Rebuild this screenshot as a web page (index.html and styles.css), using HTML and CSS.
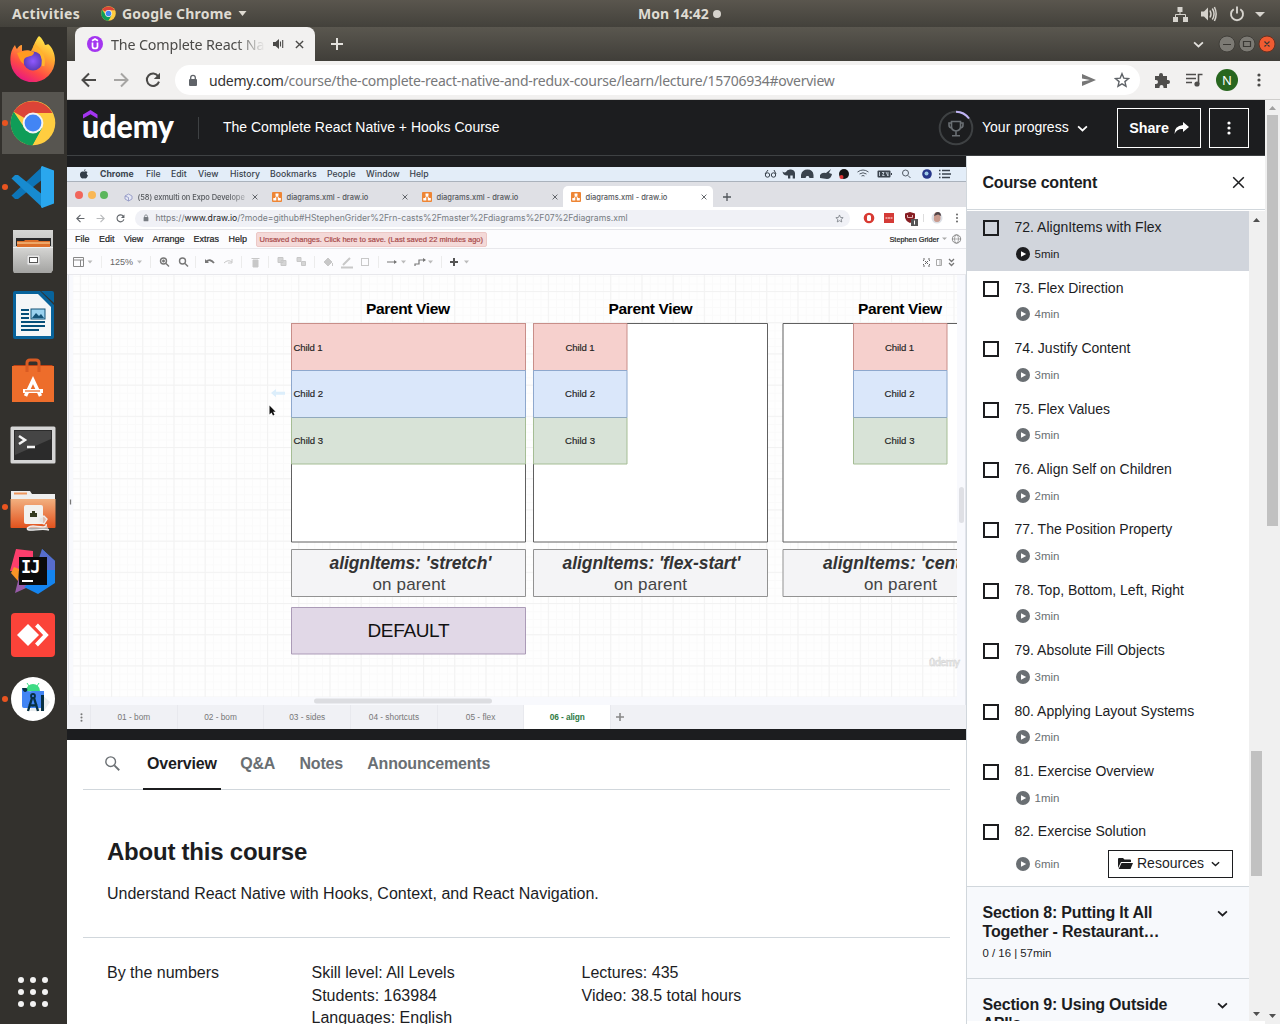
FILE: index.html
```html
<!DOCTYPE html>
<html lang="en">
<head>
<meta charset="utf-8">
<title>The Complete React Native + Hooks Course</title>
<link rel="stylesheet" href="styles.css">
</head>
<body>
<svg width="0" height="0" class="defs">
  <defs>
    <symbol id="chrome" viewBox="0 0 46 46">
      <circle cx="23" cy="23" r="22.3" fill="#ffcd40"/>
      <path d="M23 23L3.7 11.8A22.3 22.3 0 0 1 42.3 13H23Z" fill="#db4437"/>
      <path d="M3.7 11.8A22.3 22.3 0 0 0 22.4 45.3L32 28 14.2 27.6Z" fill="#0f9d58"/>
      <path d="M22.4 45.3L31.7 28 23 30Z" fill="#0f9d58"/>
      <circle cx="23" cy="23" r="10.4" fill="#f4f4f4"/><circle cx="23" cy="23" r="8.4" fill="#4285f4"/>
    </symbol>
    <symbol id="play" viewBox="0 0 14 14"><circle cx="7" cy="7" r="7" fill="currentColor"/><path d="M5 4.2L10.2 7 5 9.8Z" fill="#fff"/></symbol>
    <symbol id="chev" viewBox="0 0 10 6"><path d="M1 1L5 4.8 9 1" fill="none" stroke="currentColor" stroke-width="1.6"/></symbol>
    <symbol id="xmark" viewBox="0 0 10 10"><path d="M1 1L9 9M9 1L1 9" fill="none" stroke="currentColor" stroke-width="1.5"/></symbol>
    <symbol id="drawio" viewBox="0 0 10 10"><rect width="10" height="10" rx="1" fill="#ee8534"/><path d="M5 3L3 7M5 3L7 7" stroke="#fff" fill="none"/><path d="M3.5 1.5h3v2.3h-3zM1.3 6h3v2.4h-3zM5.8 6h3v2.4h-3z" fill="#fff"/></symbol>
    <symbol id="back" viewBox="0 0 16 16"><path d="M15 8H2M8 1.5L1.5 8 8 14.5" fill="none" stroke="currentColor" stroke-width="2"/></symbol>
    <symbol id="reload" viewBox="0 0 16 16"><path d="M13.2 4.2A6.2 6.2 0 1 0 14 9.6" fill="none" stroke="currentColor" stroke-width="2"/><path d="M15 .8V7H8.8Z" fill="currentColor"/></symbol>
    <symbol id="lock" viewBox="0 0 10 12"><rect x="1" y="4.5" width="8" height="7" rx="1" fill="currentColor"/><path d="M2.7 5V3.1a2.3 2.3 0 0 1 4.6 0V5" fill="none" stroke="currentColor" stroke-width="1.3"/></symbol>
    <symbol id="star" viewBox="0 0 16 16"><path d="M8 1.7l1.8 4.4 4.7.4-3.6 3.1 1.1 4.6L8 11.8l-4 2.4 1.1-4.6L1.5 6.500l4.700-.4Z" fill="none" stroke="currentColor" stroke-width="1.400"/></symbol>
    <symbol id="dots" viewBox="0 0 4 14"><circle cx="2" cy="2" r="1.600" fill="currentColor"/><circle cx="2" cy="7" r="1.600" fill="currentColor"/><circle cx="2" cy="12" r="1.600" fill="currentColor"/></symbol>
    <symbol id="mag" viewBox="0 0 14 14"><circle cx="5.300" cy="5.300" r="4.500" fill="none" stroke="currentColor" stroke-width="1.300"/><path d="M8.700 8.700L13.300 13.300" stroke="currentColor" stroke-width="1.700"/></symbol>
    <symbol id="down" viewBox="0 0 8 5"><path d="M0 0h8L4 5Z" fill="currentColor"/></symbol>
    <linearGradient id="ffo" x1=".8" y1="0" x2=".25" y2="1"><stop offset="0" stop-color="#fff44f"/><stop offset=".35" stop-color="#ffa930"/><stop offset=".7" stop-color="#ff4a45"/><stop offset="1" stop-color="#e5118a"/></linearGradient>
    <radialGradient id="ffp"><stop offset="0" stop-color="#9059ff"/><stop offset="1" stop-color="#5b3bb8"/></radialGradient>
    <linearGradient id="orange" x1="0" y1="0" x2="0" y2="1"><stop offset="0" stop-color="#f2b07f"/><stop offset="1" stop-color="#e2521d"/></linearGradient>
    <linearGradient id="silver" x1="0" y1="0" x2="0" y2="1"><stop offset="0" stop-color="#d6d6d4"/><stop offset="1" stop-color="#a3a3a1"/></linearGradient>
    <pattern id="minor" x="111.500" y="291.400" width="7.800" height="7.800" patternUnits="userSpaceOnUse"><path d="M0 .5H7.800M.5 0V7.800" stroke="#fafafa"/></pattern>
    <pattern id="major" x="111" y="291" width="31.200" height="31.200" patternUnits="userSpaceOnUse"><path d="M0 .5H31.200M.5 0V31.200" stroke="#f2f2f2"/></pattern>
    <clipPath id="canvasclip"><rect x="73" y="275" width="884" height="422"/></clipPath>
  </defs>
</svg>

<header class="topbar">
  <span class="activities">Activities</span>
  <svg class="app-ico" width="15" height="15"><use href="#chrome"/></svg>
  <span class="appname">Google Chrome</span>
  <svg class="app-caret" width="9" height="5"><use href="#down"/></svg>
  <span class="clock">Mon 14:42</span><i class="clockdot"></i>
  <svg class="tray" width="96" height="18" viewBox="1170 4 96 18" fill="#d6d3cd" stroke="none">
    <path d="M1177.500 6h5v5h-5zM1173 16h5v5h-5zM1183 16h5v5h-5z"/><path d="M1180 10v3.500M1175.500 17v-3.500h10V17" fill="none" stroke="#d6d3cd"/>
    <path d="M1201 10.500h3l4-4v13l-4-4h-3z"/><path d="M1210 9.500q2 3.500 0 7M1212.300 7.500q3.500 5.500 0 11M1214.400 6q3.500 7 0 14" fill="none" stroke="#d6d3cd" stroke-width="1.500"/>
    <path d="M1233.700 8.200a6 6 0 1 0 6.600 0M1237 5.500v7" fill="none" stroke="#d6d3cd" stroke-width="1.900"/><path d="M1255 11h10l-5 5z"/>
  </svg>
</header>

<div class="desktop">
<nav class="dock">
  <div class="app"><svg width="46" height="46" viewBox="0 0 46 46"><path d="M29 0c3 2 5 6 6 9 2 0 3-1 3-1 4 3 7 9 7 16a22.300 22.300 0 0 1-44.600 0C.4 17 2 13 5 9c0 0 1 3 2 4 1-2 3-4 5-4v6c3-1 7-1 9 0L24 9c1-3 3-7 5-9Z" fill="url(#ffo)"/><circle cx="23" cy="25" r="9.500" fill="url(#ffp)"/><path d="M7 17c6-2 11-2 17-1 0 4-4 4-7 5s-4 4-3 7c-4-2-5-7-7-11Z" fill="#ff9a20"/><path d="M24 9c4 3 11 10 9 21" fill="none" stroke="#ffb52e" stroke-width="3"/></svg></div>
  <div class="app active run"><svg width="46" height="46"><use href="#chrome"/></svg></div>
  <div class="app run"><svg width="46" height="46" viewBox="0 0 46 46"><path d="M33 2L1.500 31.500 5 35h3L33 15Z" fill="#0d75b8"/><path d="M33 44L1.500 14.500 5 11h3L33 31Z" fill="#178bd0"/><path d="M32 2l12 4.500v33L32 44 31 43V3Z" fill="#2aa7ee"/></svg></div>
  <div class="app"><svg width="46" height="46" viewBox="0 0 46 46"><path d="M3 2h40v40l-2 3H4l-1-3Z" fill="url(#silver)"/><path d="M6 10h35v8H6Z" fill="#29292a"/><path d="M7 13h7l1-1h13l1 1h11v6H7Z" fill="#dc6f2b"/><path d="M7 15h33" stroke="#ffdfa5"/><path d="M3 19h40v23l-2 3H4l-1-3Z" fill="url(#silver)"/><path d="M3 19h40v1H3z" fill="#eee"/><rect x="17" y="27" width="13" height="10" rx="1.500" fill="#e9e9e9" stroke="#bababa"/><rect x="19.500" y="29.500" width="8" height="5" fill="#fff" stroke="#555"/></svg></div>
  <div class="app"><svg width="46" height="48" viewBox="0 0 46 48"><path d="M5 0h25l14 14v32q0 2-2 2H5q-2 0-2-2V2q0-2 2-2Z" fill="#08639b"/><path d="M6 3h22l13 13v29H6Z" fill="#f4f6f7"/><path d="M31 0h11q2 0 2 2v10Z" fill="#08639b"/><path d="M11 19h8M11 23h8M11 27h8M11 31h24M11 35h24M11 39h18" stroke="#064f79" stroke-width="2"/><rect x="21" y="18" width="14" height="10" fill="#9bd2ef" stroke="#155377"/><path d="M22 27l4-5 3 3 2-2 3 4Z" fill="#155377"/></svg></div>
  <div class="app low"><svg width="46" height="46" viewBox="0 0 46 46"><path d="M2 8h42v36H2Z" fill="#ed6d2b"/><path d="M3 8h40l-1-1H4Z" fill="#bd4013"/><path d="M17 14V5q0-3 3-3h6q3 0 3 3v9" stroke="#d95b23" stroke-width="3" fill="none"/><path d="M15.500 38L23 22l7.500 16" stroke="#fff" stroke-width="3.500" fill="none"/><path d="M13 33h20" stroke="#fff" stroke-width="4"/><path d="M15 33h15" stroke="#ed6d2b" stroke-width="1.300"/></svg></div>
  <div class="app low"><svg width="46" height="40" viewBox="0 0 46 40"><rect x=".5" y="1.500" width="45" height="37" rx="1.500" fill="#d6d6d6"/><rect x="4" y="5" width="38" height="30" fill="#2b2b2b"/><path d="M5 6h36v8L5 30Z" fill="#454545"/><path d="M9 11l6 4-6 4M17 22h8" stroke="#f5f5f5" stroke-width="2.500" fill="none"/></svg></div>
  <div class="app run low"><svg width="46" height="44" viewBox="0 0 46 44"><path d="M1 8V4h19l2 3h23v10H1Z" fill="#eee"/><path d="M4 6.500h13" stroke="#ee965c" stroke-width="2"/><path d="M.5 12h45v28q0 1-1 1h-43q-1 0-1-1Z" fill="url(#orange)"/><rect x="14" y="18" width="19" height="19" rx="2" fill="#f2f1ee"/><path d="M20 30v-4h2v-2h3v2h2v4Z" fill="#373c21"/><path d="M36 37c2 5-9 2-13 2s-8 3-4 4 12-2 20 0M29 31l5-2 3 3-3 5-5-2Z" fill="#ddd" fill-opacity=".7" stroke="#eee" stroke-width="1.400"/></svg></div>
  <div class="app"><svg width="46" height="46" viewBox="0 0 46 46"><path d="M6 1l17 2v20H0Z" fill="#fd3e6c"/><path d="M4 19l5 2-1 12-7-8Z" fill="#f99427"/><path d="M8 18h17v18L5 45l5-20Z" fill="#975ba8"/><path d="M32 1l13 12v22l-17 11-14-7 17-12Z" fill="#1484ef"/><path d="M32 1l13 12v9H25Z" fill="#576dcc"/><rect x="9" y="9" width="28" height="28" fill="#0b0b0b"/><text x="11" y="25" class="ij">IJ</text><path d="M12 33h11" stroke="#fff" stroke-width="2"/></svg></div>
  <div class="app"><svg width="46" height="46" viewBox="0 0 46 46"><rect x="1" y="1" width="44" height="44" rx="4" fill="#fb4339"/><path d="M18 12l11 11-11 11L7 23Z" fill="#fff"/><path d="M26.500 13L36 23l-9.500 10" stroke="#fff" stroke-width="4" fill="none"/></svg></div>
  <div class="app run"><svg width="46" height="46" viewBox="0 0 46 46"><circle cx="23" cy="23" r="22" fill="#fff"/><path d="M28 15l12 11-6 9H20Z" fill="#e9ecee"/><path d="M16 15a7 7 0 0 1 14 0Z" fill="#3ddc84"/><path d="M17 7l2 3M29 7l-2 3" stroke="#3ddc84"/><path d="M12 12q4 4 10 3h12v17H14q-2 0-2-2Z" fill="#4285f4"/><path d="M12 12h4q2 0 1 3-3 3-5-3ZM31 19h3v16h-3Z" fill="#073042"/><circle cx="23" cy="20" r="2" fill="#4285f4" stroke="#073042" stroke-width="1.800"/><path d="M22 22l-4 13M24 22l4 13M19 28q4 3 8 0" stroke="#073042" stroke-width="2.400" fill="none"/></svg></div>
  <svg class="grid9" width="32" height="32" viewBox="0 0 32 32" fill="#f2f2f2"><circle cx="4" cy="4" r="3"/><circle cx="16" cy="4" r="3"/><circle cx="28" cy="4" r="3"/><circle cx="4" cy="16" r="3"/><circle cx="16" cy="16" r="3"/><circle cx="28" cy="16" r="3"/><circle cx="4" cy="28" r="3"/><circle cx="16" cy="28" r="3"/><circle cx="28" cy="28" r="3"/></svg>
</nav>

<main class="window">
  <div class="tabstrip">
    <div class="tab">
      <svg width="16" height="16" viewBox="0 0 16 16"><circle cx="8" cy="8" r="8" fill="#a435f0"/><path d="M5 4.800L8 3l3 1.800M5.500 6.500v4q0 2 2.500 2t2.500-2v-4" stroke="#fff" stroke-width="1.700" fill="none"/></svg>
      <span class="tabname">The Complete React Na</span>
      <svg class="aud" width="11" height="10" viewBox="0 0 11 10"><path d="M0 3h2.500L6 0v10L2.500 7H0Z" fill="#4b4a48"/><path d="M7.500 2.500v5M9.700 1v8" stroke="#4b4a48" stroke-width="1.100"/></svg>
      <svg class="tabx" width="9" height="9"><use href="#xmark"/></svg>
    </div>
    <svg class="plus" width="12" height="12" viewBox="0 0 12 12"><path d="M6 0v12M0 6h12" stroke="#e4e2de" stroke-width="2"/></svg>
    <svg class="stripchev" width="11" height="7"><use href="#chev"/></svg>
    <svg class="winbtns" width="60" height="20" viewBox="0 0 60 20"><circle cx="11" cy="10" r="8" fill="#7c7a74" stroke="#403e39"/><circle cx="31" cy="10" r="8" fill="#7c7a74" stroke="#403e39"/><circle cx="51" cy="10" r="8" fill="#ef5b31" stroke="#693020"/><path d="M7 10.500h8M27.500 7.500h7v5h-7zM48.500 7.500l5 5M53.500 7.500l-5 5" fill="none" stroke="#3a3834" stroke-width="1.200"/></svg>
  </div>
  <div class="toolbar">
    <svg class="tb" width="16" height="16"><use href="#back"/></svg>
    <svg class="tb fwd" width="16" height="16"><use href="#back"/></svg>
    <svg class="tb" width="16" height="16"><use href="#reload"/></svg>
    <div class="omni">
      <svg width="10" height="13"><use href="#lock"/></svg>
      <span class="url"><b>udemy.com</b>/course/the-complete-react-native-and-redux-course/learn/lecture/15706934#overview</span>
      <svg width="14" height="12" viewBox="0 0 14 12" class="send"><path d="M0 0l14 6-14 6V7.500L8 6 0 4.500Z" fill="#777"/></svg>
      <svg width="16" height="16" class="ostar"><use href="#star"/></svg>
    </div>
    <svg class="ext" width="16" height="16" viewBox="0 0 16 16"><path d="M1 4h4V3a2 2 0 0 1 4 0v1h4v4h1a2 2 0 0 1 0 4h-1v4H9.500v-1a2 2 0 0 0-4 0v1H1v-4h1a2 2 0 0 0 0-4H1Z" fill="#4f4e4c"/></svg>
    <svg class="media" width="17" height="14" viewBox="0 0 17 14"><path d="M0 1.500h10M0 5.500h10M0 9.500h6M12.500 11V1.500h4" stroke="#4f4e4c" stroke-width="1.600" fill="none"/><circle cx="11" cy="11" r="2.600" fill="#4f4e4c"/></svg>
    <span class="avatar">N</span>
    <svg class="kebab" width="4" height="14"><use href="#dots"/></svg>
  </div>

  <div class="page">
  <div class="content">
    <div class="chead">
      <svg class="logo" width="92" height="38" viewBox="0 0 92 38"><path d="M0 4.500L7.500 0l7 4.500v4L7.500 4.300 0 8.500Z" fill="#a435f0"/><text x="-1" y="28" class="word" textLength="92" lengthAdjust="spacingAndGlyphs">udemy</text></svg>
      <i class="vr"></i>
      <span class="ctitle">The Complete React Native + Hooks Course</span>
      <svg class="trophy" width="36" height="36" viewBox="0 0 36 36" fill="none"><circle cx="18" cy="18" r="16.300" stroke="#3e4143" stroke-width="2"/><path d="M18 1.700A16.300 16.300 0 0 1 31 8.500" stroke="#c0b4f5" stroke-width="2"/><path d="M13.500 11.500h9v5q0 4-4.500 4.500-4.500-.5-4.500-4.500ZM13.500 13H11v2q0 3 3 3M22.500 13H25v2q0 3-3 3M18 21v4.500M14 25.700h8" stroke="#6a6f73" stroke-width="1.600"/></svg>
      <span class="prog">Your progress</span>
      <svg width="11" height="7" class="progchev"><use href="#chev"/></svg>
      <span class="share">Share<svg width="15" height="12" viewBox="0 0 15 12"><path d="M9 0l6 5-6 5V7Q3 6.500.5 12 0 4 9 3Z" fill="#fff"/></svg></span>
      <span class="more"><svg width="4" height="14"><use href="#dots"/></svg></span>
    </div>
    <div class="cols">
    <section class="left">
      <div class="video">
        <div class="macbar">
          <svg width="10" height="10" viewBox="0 0 10 10"><path d="M5 2.800Q6.500 1.800 8.500 3 6.800 4.800 9 6.500 7.500 10 6 9.500q-1-.4-2 0C2 10 0 6 1.500 3.800 3 2 5 2.800 5 2.800ZM5 2.200Q5 .5 6.500 0 6.600 1.700 5 2.200Z" fill="#333d48"/></svg>
          <b>Chrome</b><span>File</span><span>Edit</span><span>View</span><span>History</span><span>Bookmarks</span><span>People</span><span>Window</span><span>Help</span>
          <svg width="192" height="12" viewBox="764 168 192 12" fill="#3a434d"><path d="M766 174l3-4M777 174l-2-4" stroke="#3a434d"/><circle cx="768.500" cy="175" r="2.200" fill="none" stroke="#3a434d"/><circle cx="774.500" cy="175" r="2.200" fill="none" stroke="#3a434d"/><path d="M783.500 171.500q2 1.500 3.500.5 1-3 5-2.500 4 .5 4 4v5h-2.300v-3h-2.400v3h-2.300v-3q-5 .5-5.500-4ZM802 178v-3q1-5.500 6.500-5.500t6 5.500v3h-4l-1-2h-2l-1 2ZM821 178v-3q2-3 6-2l5-4-2 4 3 1q-1 5-5 5Z"/><circle cx="845" cy="174" r="5" fill="#151515"/><circle cx="842.500" cy="177" r="2" fill="#d33"/><path d="M858.500 172q5.500-4 11 0M860.500 174q3.500-2.500 7 0M862.500 176q1.500-1 3 0" fill="none" stroke="#505963"/><rect x="878.500" y="170.500" width="13" height="7" rx="1"/><path d="M892.500 173v2" stroke="#3a434d"/><path d="M880.500 172v4M883 172.500h2l-1.500 3h2M887 172l2 4M889 172v4" stroke="#dbe7f3" fill="none" stroke-width=".8"/><circle cx="906.500" cy="173" r="3" fill="none" stroke="#505963"/><path d="M909 175.500l2.500 2.500" stroke="#505963"/><circle cx="928" cy="174" r="4.800" fill="#26368a"/><circle cx="927.500" cy="173.500" r="2" fill="#9dcbe5"/><path d="M943 170.500h8M943 174h9M943 177.500h8M940 170.500h1.500M940 174h1.500M940 177.500h1.500" stroke="#3a434d" stroke-width="1.300"/></svg>
        </div>
        <div class="mactabs">
          <i class="tl r"></i><i class="tl y"></i><i class="tl g"></i>
          <svg class="t1" width="9" height="9" viewBox="0 0 9 9"><path d="M4.500 1L8 3v3L4.500 8 1 6V3ZM4.500 4.500V8M1 3l3.500 1.500" fill="#e5e8f5" stroke="#8a90c0" stroke-width=".8"/></svg>
          <span class="mt mt1">(58) exmulti on Expo Develope</span><svg class="mx" width="6" height="6"><use href="#xmark"/></svg>
          <svg class="di d2" width="10" height="10"><use href="#drawio"/></svg><span class="mt mt2">diagrams.xml - draw.io</span><svg class="mx" width="6" height="6"><use href="#xmark"/></svg>
          <svg class="di d2" width="10" height="10"><use href="#drawio"/></svg><span class="mt mt2">diagrams.xml - draw.io</span><svg class="mx" width="6" height="6"><use href="#xmark"/></svg>
          <div class="mactab"><svg width="10" height="10"><use href="#drawio"/></svg><span class="mt mt2">diagrams.xml - draw.io</span><svg class="mx" width="6" height="6"><use href="#xmark"/></svg></div>
          <svg class="mplus" width="8" height="8" viewBox="0 0 8 8"><path d="M4 0v8M0 4h8" stroke="#50555a" stroke-width="1.300"/></svg>
        </div>
        <div class="macurl">
          <svg width="9" height="9"><use href="#back"/></svg><svg class="fwd" width="9" height="9"><use href="#back"/></svg><svg width="9" height="9"><use href="#reload"/></svg>
          <div class="macomni"><svg width="6" height="8"><use href="#lock"/></svg><span>https://<b>www.draw.io</b>/?mode=github#HStephenGrider%2Frn-casts%2Fmaster%2Fdiagrams%2F07%2Fdiagrams.xml</span><svg class="mstar" width="9" height="9"><use href="#star"/></svg></div>
          <svg class="mext" width="104" height="16" viewBox="856 211 104 16"><circle cx="864" cy="219" r="5.300" fill="#d83a32"/><rect x="862" y="216" width="4" height="6" rx="1.500" fill="#fff"/><rect x="879" y="214" width="10" height="10" fill="#d43b37"/><path d="M880.500 219h7" stroke="#f3b9b4" stroke-width="1.500" stroke-dasharray="2 .5"/><path d="M905 213l5 1.500v4q-1 4-5 5.500-4-1.500-5-5.500v-4Z" fill="#861d22"/><path d="M902.500 216v2.500h5v-2.500" fill="none" stroke="#e5b4b4"/><rect x="906" y="220" width="7" height="7" fill="#555"/><path d="M909.500 221.500v4" stroke="#fff"/><path d="M918.500 215v8" stroke="#ddd"/><circle cx="932" cy="219" r="5.500" fill="#dcdfe5"/><path d="M929 218q0-5 3-5t3.500 5-3.500 5-3-5Z" fill="#c99a8d"/><path d="M929 217q1-4 4-4t3 4l-3-1.500Z" fill="#514548"/><circle cx="952" cy="215.500" r=".9" fill="#555"/><circle cx="952" cy="219" r=".9" fill="#555"/><circle cx="952" cy="222.500" r=".9" fill="#555"/></svg>
        </div>
        <div class="iomenu"><span>File</span><span>Edit</span><span>View</span><span>Arrange</span><span>Extras</span><span>Help</span><em>Unsaved changes. Click here to save. (Last saved 22 minutes ago)</em><span class="sg">Stephen Grider</span><svg width="20" height="10" viewBox="0 0 20 10"><path d="M0 3.500h5L2.500 6Z" fill="#aaa"/><circle cx="14.500" cy="5" r="4.200" fill="none" stroke="#888"/><ellipse cx="14.500" cy="5" rx="2" ry="4.200" fill="none" stroke="#888" stroke-width=".7"/><path d="M10.500 5h8" stroke="#888" stroke-width=".7"/></svg></div>
        <div class="iotools">
          <svg width="36" height="20" viewBox="67 252 36 20"><path d="M73.500 257.500h10v9h-10zM73.500 260h10M80.500 260v6.500" fill="none" stroke="#888"/><path d="M87.500 260.500h5l-2.500 3Z" fill="#bbb"/><path d="M101.500 256v12" stroke="#eee"/></svg>
          <span>125%</span>
          <svg width="824" height="20" viewBox="137 252 824 20" fill="none" stroke="#c8c8c8"><path d="M137 260.500h5l-2.500 3Z" fill="#bbb" stroke="none"/><path d="M150.500 256v12M195.500 256v12M241.500 256v12M268.500 256v12M314.500 256v12M378.500 256v12M441.500 256v12" stroke="#ececec"/><g stroke="#777" stroke-width="1.400"><circle cx="163.500" cy="261" r="3"/><path d="M166 263.500l3 3M162 261h3M163.500 259.500v3"/><circle cx="182.500" cy="261" r="3"/><path d="M185 263.500l3 3"/><path d="M206 262q4-4 8 1" stroke-width="1.800"/></g><path d="M205 259v4h4Z" fill="#777" stroke="none"/><path d="M224 263q4-4 8-1M232 259v4h-4" /><path d="M251.500 258.500h8M253 260h5v7h-5z" fill="#c8c8c8"/><path d="M278 257.500h5v5h-5zM281 260.500h5v5h-5zM297 257.500h4v4h-4zM301.500 261.500h4v4h-4z" fill="#d5d5d5"/><path d="M324 262l4-4 4 4-4 4ZM332.500 263v3" fill="#c8c8c8"/><path d="M341 267.500h12M343 265l7-7" stroke-width="2"/><rect x="361.500" y="258.500" width="7" height="7"/><path d="M387 262h9M415 266v-2h4v-4h6" stroke="#777" stroke-width="1.200"/><path d="M394 260l3 2-3 2ZM423 258l3 2-3 2Z" fill="#777" stroke="none"/><path d="M401 260.500h5l-2.500 3ZM428 260.500h5l-2.500 3ZM464 260.500h5l-2.500 3Z" fill="#bbb" stroke="none"/><path d="M450 262h8M454 258v8" stroke="#555" stroke-width="2"/><path d="M923 259h2M928 259h2M923 266h2M928 266h2M923.500 260v1M929.500 260v1M923.500 264v1M929.500 264v1M925 261l3 3M928 261l-3 3" stroke="#666"/><path d="M936.500 259.500h5v6h-5zM940 260v5" stroke="#aaa"/><path d="M949 259l2.500 2.500L954 259M949 263l2.500 2.500L954 263" stroke="#777" stroke-width="1.300"/></svg>
        </div>
        <svg class="canvas" width="899" height="430" viewBox="67 275 899 430">
          <rect x="67" y="275" width="899" height="430" fill="#f8f9fd"/><rect x="73" y="275" width="884" height="422" fill="#fefefe"/>
          <path d="M68.500 275v430M965.500 275v430" stroke="#e3e5ec"/>
          <g clip-path="url(#canvasclip)">
            <rect x="73" y="275" width="884" height="422" fill="url(#minor)"/><rect x="73" y="275" width="884" height="422" fill="url(#major)"/>
            <g fill="#fff" stroke="#606060"><path d="M291.500 323.500h234v218.500h-234zM533.500 323.500h234v218.500h-234zM783 323.500h234v218.500h-234z"/></g>
            <g fill="#f6d0cd" stroke="#c88e89"><path d="M291.500 323.500h234v47h-234zM533.500 323.500h93.500v47h-93.500zM853.500 323.500h93.500v47h-93.500z"/></g>
            <g fill="#dae7fa" stroke="#8ea8cd"><path d="M291.500 370.500h234v47h-234zM533.500 370.500h93.500v47h-93.500zM853.500 370.500h93.500v47h-93.500z"/></g>
            <g fill="#d8e3d7" stroke="#a5bd94"><path d="M291.500 417.500h234v46.500h-234zM533.500 417.500h93.500v46.500h-93.500zM853.500 417.500h93.500v46.500h-93.500z"/></g>
            <path d="M291.500 417.500h234M533.500 417.500h93.500M853.500 417.500h93.500" stroke="#90a9bd"/>
            <g fill="#f4f4f6" stroke="#929292"><path d="M291.500 549.500h234v47h-234zM533.500 549.500h234v47h-234zM783 549.500h234v47h-234z"/></g>
            <path d="M291.500 607.500h234v46.500h-234z" fill="#e1d8e7" stroke="#ab9bb7"/>
            <g class="pv"><text x="366" y="314" textLength="84">Parent View</text><text x="608.500" y="314" textLength="84">Parent View</text><text x="858" y="314" textLength="84">Parent View</text></g>
            <g class="ch"><text x="293.500" y="350.500" textLength="29">Child 1</text><text x="293.500" y="397.300" textLength="29.500">Child 2</text><text x="293.500" y="444" textLength="29.500">Child 3</text><text x="565.500" y="350.500" textLength="29">Child 1</text><text x="565" y="397.300" textLength="30">Child 2</text><text x="565" y="444" textLength="30">Child 3</text><text x="885" y="350.500" textLength="29">Child 1</text><text x="884.500" y="397.300" textLength="30">Child 2</text><text x="884.500" y="444" textLength="30">Child 3</text></g>
            <g class="al"><text x="329.500" y="569" textLength="162">alignItems: 'stretch'</text><text x="562.500" y="569" textLength="178">alignItems: 'flex-start'</text><text x="823" y="569" textLength="159">alignItems: 'center'</text></g>
            <g class="op"><text x="372.500" y="589.500" textLength="73">on parent</text><text x="614" y="589.500" textLength="73">on parent</text><text x="864" y="589.500" textLength="73">on parent</text></g>
            <text x="367.500" y="637" class="df" textLength="82">DEFAULT</text>
          </g>
          <path d="M271 393l5-4v2.800h9v3h-9v2.500Z" fill="#dceefb"/><path d="M269.500 405.500v9l2-2 1.500 3 1.500-.8-1.400-3h2.500Z" fill="#111"/>
          <path d="M70.500 499.500v5" stroke="#777" stroke-width="1.300"/><rect x="959" y="487" width="5" height="36" rx="2.500" fill="#dfe0e5"/><rect x="314" y="698.500" width="178" height="5" rx="2.500" fill="#dcdde1"/>
          <text x="929" y="666" class="wm" textLength="31">ûdemy</text>
        </svg>
        <div class="sheets"><i><svg width="3" height="9"><use href="#dots"/></svg></i><span>01 - bom</span><span>02 - bom</span><span>03 - sides</span><span>04 - shortcuts</span><span>05 - flex</span><span class="on">06 - align</span><svg width="8" height="8" viewBox="0 0 8 8"><path d="M4 0v8M0 4h8" stroke="#888" stroke-width="1.600"/></svg></div>
      </div>
      <div class="tabs"><svg width="15" height="15"><use href="#mag"/></svg><span class="cur">Overview</span><span>Q&amp;A</span><span>Notes</span><span>Announcements</span></div>
      <div class="about"><h1>About this course</h1><p>Understand React Native with Hooks, Context, and React Navigation.</p></div>
      <div class="nums"><div>By the numbers</div><div>Skill level: All Levels<br>Students: 163984<br>Languages: English</div><div>Lectures: 435<br>Video: 38.5 total hours</div></div>
    </section>
    <aside class="side">
      <div class="sidehead"><h2>Course content</h2><svg width="13" height="13" viewBox="0 0 13 13"><path d="M1.200 1.200l10.600 10.600M11.800 1.200L1.200 11.800" stroke="#1c1d1f" stroke-width="1.500"/></svg></div>
      <div class="sidebody">
        <div class="list">
          <div class="item sel"><i></i><div><p>72. AlignItems with Flex</p><small><svg width="14" height="14"><use href="#play"/></svg>5min</small></div></div>
          <div class="item"><i></i><div><p>73. Flex Direction</p><small><svg width="14" height="14"><use href="#play"/></svg>4min</small></div></div>
          <div class="item"><i></i><div><p>74. Justify Content</p><small><svg width="14" height="14"><use href="#play"/></svg>3min</small></div></div>
          <div class="item"><i></i><div><p>75. Flex Values</p><small><svg width="14" height="14"><use href="#play"/></svg>5min</small></div></div>
          <div class="item"><i></i><div><p>76. Align Self on Children</p><small><svg width="14" height="14"><use href="#play"/></svg>2min</small></div></div>
          <div class="item"><i></i><div><p>77. The Position Property</p><small><svg width="14" height="14"><use href="#play"/></svg>3min</small></div></div>
          <div class="item"><i></i><div><p>78. Top, Bottom, Left, Right</p><small><svg width="14" height="14"><use href="#play"/></svg>3min</small></div></div>
          <div class="item"><i></i><div><p>79. Absolute Fill Objects</p><small><svg width="14" height="14"><use href="#play"/></svg>3min</small></div></div>
          <div class="item"><i></i><div><p>80. Applying Layout Systems</p><small><svg width="14" height="14"><use href="#play"/></svg>2min</small></div></div>
          <div class="item"><i></i><div><p>81. Exercise Overview</p><small><svg width="14" height="14"><use href="#play"/></svg>1min</small></div></div>
          <div class="item last"><i></i><div><p>82. Exercise Solution</p><small><svg width="14" height="14"><use href="#play"/></svg>6min<span class="res"><svg width="15" height="11" viewBox="0 0 15 11"><path d="M0 10V1q0-1 1-1h4l1.500 1.500H12q1 0 1 1V4H3Z" fill="#1c1d1f"/><path d="M3.500 5H15l-2.500 6H.7Z" fill="#1c1d1f"/></svg>Resources<svg class="rc" width="9" height="6"><use href="#chev"/></svg></span></small></div></div>
          <div class="sec"><div><h3>Section 8: Putting It All<br>Together - Restaurant…</h3><small>0 / 16 | 57min</small></div><svg width="11" height="7"><use href="#chev"/></svg></div>
          <div class="sec"><div><h3>Section 9: Using Outside<br>API's</h3></div><svg width="11" height="7"><use href="#chev"/></svg></div>
        </div>
        <div class="sbar inner"><svg width="7" height="4" viewBox="0 0 7 4"><path d="M0 4h7L3.500 0Z" fill="#505050"/></svg><i></i><svg width="7" height="4" viewBox="0 0 7 4"><path d="M0 0h7L3.500 4Z" fill="#505050"/></svg></div>
      </div>
    </aside>
    </div>
  </div>
  <div class="sbar outer"><svg width="7" height="4" viewBox="0 0 7 4"><path d="M0 4h7L3.500 0Z" fill="#a0a0a0"/></svg><i></i><svg width="7" height="4" viewBox="0 0 7 4"><path d="M0 0h7L3.500 4Z" fill="#505050"/></svg></div>
  </div>
</main>
</div>
</body>
</html>
```
FILE: styles.css
```css
* { box-sizing: border-box; }
body { margin: 0; width: 1280px; height: 1024px; overflow: hidden; font-family: "Liberation Sans", Arial, sans-serif; color: #1c1d1f; display: flex; flex-direction: column; }
svg { display: block; flex: none; }
h1, h2, h3, p { margin: 0; }
span { white-space: nowrap; }
.defs { position: absolute; }

.topbar { height: 27px; flex: none; display: flex; align-items: center; background: linear-gradient(#5a564e, #43413b); color: #dfdbd2; font: bold 14px "Noto Sans", sans-serif; padding-left: 12px; }
.activities { width: 89px; letter-spacing: .3px; }
.app-ico { margin-right: 6px; }
.appname { width: 111px; letter-spacing: .2px; }
.app-caret { margin-left: 5px; }
.clock { margin-left: 391px; width: 71px; }
.clockdot { width: 8px; height: 8px; border-radius: 50%; background: #d6d3cd; margin-left: 4px; }
.tray { margin-left: auto; margin-right: 14px; }

.desktop { flex: 1; display: flex; min-height: 0; }
.dock { width: 67px; flex: none; background: #33312d; display: flex; flex-direction: column; }
.app { height: 64px; flex: none; display: flex; align-items: center; justify-content: center; position: relative; margin-right: 1px; }
.app.low { padding-top: 4px; }
.app.active { background: linear-gradient(#575550, #575550) 2px 1px / 62px 62px no-repeat; }
.run::before { content: ""; position: absolute; left: 2px; top: 29px; width: 6px; height: 6px; border-radius: 50%; background: #e95420; }
.ij { font: bold 17px "DejaVu Sans Mono", monospace; fill: #fff; letter-spacing: -1px; }
.grid9 { margin: auto auto 16px 17px; }

.window { flex: 1; display: flex; flex-direction: column; min-width: 0; }
.tabstrip { height: 34px; flex: none; background: linear-gradient(#5a574f, #403e39); display: flex; align-items: center; padding-left: 8px; color: #e4e2de; }
.tab { width: 240px; height: 34px; background: #f2f1f0; border-radius: 8px 8px 0 0; display: flex; align-items: center; padding-left: 12px; color: #4b4a48; }
.tabname { font: 14.300px "Noto Sans", sans-serif; width: 155px; margin-left: 8px; letter-spacing: -.16px; -webkit-mask-image: linear-gradient(90deg, #000 125px, transparent 154px); }
.aud { margin-left: 7px; }
.tabx { margin-left: 11px; }
.plus { margin-left: 16px; }
.stripchev { margin-left: auto; margin-right: 12px; }
.winbtns { margin-right: 4px; }
.toolbar { height: 39px; flex: none; background: #f2f1f0; border-bottom: 1px solid #cfcecc; display: flex; align-items: center; padding-left: 14px; color: #4b4a48; }
.tb { margin-right: 16px; }
.fwd { transform: scaleX(-1); opacity: .45; }
.omni { width: 965px; height: 30px; margin-left: -2px; background: #fff; border-radius: 15px; display: flex; align-items: center; padding: 0 10px 0 13px; color: #5f6368; }
.url { margin-left: 11px; font: 14px "Noto Sans", sans-serif; width: 640px; color: #77787a; letter-spacing: -.25px; }
.url b { font-weight: 400; color: #333; }
.send { margin-left: auto; margin-right: 18px; }
.ext { margin-left: 14px; }
.media { margin-left: 16px; }
.avatar { width: 22px; height: 22px; border-radius: 50%; background: #28661f; color: #fff; font: 13px/22px "Noto Sans", sans-serif; text-align: center; margin-left: 13px; }
.kebab { margin-left: 19px; }

.page { flex: 1; display: flex; min-height: 0; }
.content { width: 1198px; display: flex; flex-direction: column; background: #fff; min-height: 0; }
.chead { height: 56px; flex: none; background: #1c1d1f; border-bottom: 1px solid #3e4143; display: flex; align-items: center; color: #fff; font-size: 14px; padding-left: 16px; }
.logo { margin-top: 3px; overflow: visible; }
.word { font: 900 32px Lato, sans-serif; fill: #fff; }
.vr { width: 1px; height: 22px; background: #3e4143; margin: 0 24px 0 23px; }
.ctitle { width: 715px; margin-top: -2px; }
.trophy { margin-right: 8px; }
.prog { width: 88px; margin-top: -2px; }
.progchev { margin: 1px 29px 0 7px; }
.share { width: 84px; height: 40px; border: 1px solid #fff; font-size: 14.300px; font-weight: bold; line-height: 36px; display: flex; align-items: center; justify-content: center; gap: 5px; }
.more { width: 40px; height: 40px; border: 1px solid #fff; margin-left: 8px; display: flex; align-items: center; justify-content: center; }
.cols { flex: 1; display: flex; min-height: 0; }
.left { width: 899px; flex: none; overflow: hidden; }

.video { height: 584px; background: #1c1d1f; padding: 11px 0; display: flex; flex-direction: column; }
.macbar { height: 15px; flex: none; background: #e3edf8; border-bottom: 1px solid #aab2bc; display: grid; grid-template-columns: 21px 46px 25px 27px 32px 40px 57px 39px 43.500px 353px 192px; align-items: center; padding-left: 12px; font: 500 8.700px Inter, sans-serif; color: #3a434d; }
.mactabs { height: 25px; flex: none; background: #dfe0e5; display: flex; align-items: center; padding: 5px 0 0 8px; font-size: 8.500px; color: #55585d; }
.tl { width: 8px; height: 8px; border-radius: 50%; margin-right: 4.500px; margin-top: -4px; }
.r { background: #f1665b; } .y { background: #f9b754; } .g { background: #5bb65c; }
.t1 { margin-left: 11px; margin-right: 5px; }
.mt { font: 500 7.500px Inter, sans-serif; }
.mt1 { width: 111px; letter-spacing: -.08px; -webkit-mask-image: linear-gradient(90deg, #000 90px, transparent 115px); }
.mx { margin-left: 3px; }
.mt2 { width: 83px; margin-left: 5px; }
.mt2 + .mx { margin-left: 32px; }
.d2 { margin-left: 14px; }
.mactab { display: flex; align-items: center; align-self: stretch; width: 150px; height: 21px; margin: -1px 0 0 5px; padding: 1px 0 0 8px; background: #fff; border-radius: 5px 5px 0 0; }
.mplus { margin-left: 10px; }
.macurl { height: 23px; flex: none; background: #fff; display: flex; align-items: center; padding-left: 9px; gap: 11px; color: #62666b; border-bottom: 1px solid #e4e4e8; }
.macomni { width: 715px; height: 17px; background: #f0f1f6; border-radius: 9px; display: flex; align-items: center; padding: 0 6px 0 8px; font: 8.640px Inter, sans-serif; color: #777c82; margin-left: -1px; }
.macomni b { font-weight: 400; color: #222; }
.macomni span { margin-left: 6.500px; }
.mstar { margin-left: auto; }
.mext { margin-left: -5px; position: relative; left: 5px; }
.iomenu { height: 19px; flex: none; background: #fcfcfe; border-bottom: 1px solid #e8e8ec; display: grid; grid-template-columns: 24px 25px 28.500px 41px 35px 27px 634px 52px 20px; align-items: center; padding-left: 8px; font-size: 9px; color: #222; -webkit-text-stroke: .2px; }
.iomenu em { width: 231px; height: 15px; background: #f4d9d8; border: 1px solid #ecc8c6; border-radius: 2px; font: 7.540px/13px "Liberation Sans", sans-serif; color: #a94a4a; padding-left: 3px; white-space: nowrap; }
.iomenu .sg { font-size: 7.300px; }
.iotools { height: 26px; flex: none; background: #fcfcfe; border-bottom: 1px solid #e8e8ec; display: flex; align-items: center; font-size: 9px; color: #666; }
.iotools span { width: 27px; margin-left: 7px; }
.canvas { flex: none; }
.pv { font: bold 15.500px "Liberation Sans"; }
.ch { font: 9.600px "Liberation Sans"; fill: #222; stroke: #222; stroke-width: .15; }
.al { font: italic bold 17.500px "Liberation Sans"; fill: #333; }
.op { font: 17px "Liberation Sans"; fill: #444; }
.df { font: 19px "Liberation Sans"; fill: #111; }
.wm { font: bold 11px Lato; fill: #e8e8e8; stroke: #c8c8c8; stroke-width: .3; }
.sheets { height: 24px; flex: none; background: #f0f1f5; display: flex; align-items: center; font-size: 8.300px; color: #777; padding-left: 6px; }
.sheets i { width: 18px; height: 24px; display: flex; align-items: center; justify-content: center; border-right: 1px solid #e8e9ee; }
.sheets span { width: 86.700px; line-height: 24px; text-align: center; border-right: 1px solid #e8e9ee; }
.sheets .on { background: #fff; color: #2f7b44; font-weight: bold; letter-spacing: -.1px; }
.sheets > svg { margin-left: 5px; }

.tabs { height: 50px; margin: 0 16px; border-bottom: 1px solid #d1d7dc; display: flex; font-weight: bold; font-size: 16px; letter-spacing: -.19px; line-height: 47px; color: #6a6f73; padding-left: 22px; }
.tabs svg { margin: 16px 22px 0 0; }
.tabs span { margin-left: 8px; padding: 0 4px; height: 50px; margin-right: 8.300px; }
.tabs svg + span { margin-left: 1px; margin-right: 7.500px; }
.tabs .cur { color: #1c1d1f; border-bottom: 2px solid #1c1d1f; }
.about { height: 148px; margin: 0 16px; padding: 45px 24px 0; border-bottom: 1px solid #d1d7dc; }
.about h1 { font-size: 24px; line-height: 34px; letter-spacing: -.23px; }
.about p { font-size: 16px; line-height: 22px; margin-top: 14px; }
.nums { display: grid; grid-template-columns: 204.500px 270px 1fr; padding: 24.200px 0 0 40px; font-size: 16px; line-height: 22.400px; }

.side { width: 299px; flex: none; display: flex; flex-direction: column; border-left: 1px solid #d1d7dc; min-height: 0; }
.sidehead { height: 54px; flex: none; border-bottom: 1px solid #d1d7dc; display: flex; align-items: center; justify-content: space-between; padding: 0 20px 0 15.500px; }
.sidehead h2 { font-size: 16px; letter-spacing: -.2px; }
.sidebody { flex: 1; display: flex; min-height: 0; padding: 1px 0 3px; }
.list { width: 282px; overflow: hidden; }
.item { height: 60.400px; display: flex; padding: 8.450px 0 0 16px; }
.item > i { width: 16px; height: 16px; border: 2px solid #1c1d1f; margin: 1px 15.500px 0 0; flex: none; }
.item > div { flex: 1; }
.item p { font-size: 14px; line-height: 17px; }
.item small { display: flex; align-items: center; font-size: 11.500px; color: #6a6f73; height: 14px; margin-top: 10.550px; padding-left: 1.500px; gap: 4.500px; }
.sel { background: #d1d5dc; }
.item.sel small { color: #1c1d1f; }
.item.last { height: 71.500px; }
.item.last small { height: 28px; margin-top: 9.550px; }
.res { margin-left: auto; margin-right: 16px; width: 125px; height: 28px; border: 1px solid #1c1d1f; background: #fff; color: #1c1d1f; font-size: 14px; line-height: 25px; display: flex; align-items: center; padding-left: 9px; gap: 4px; }
.rc { margin-left: 3px; }
.sec { height: 92px; background: #f7f9fc; border-top: 1px solid #d1d7dc; padding: 16px 21px 0 15.500px; display: flex; justify-content: space-between; overflow: hidden; }
.sec h3 { font-size: 16px; line-height: 19px; letter-spacing: -.19px; }
.sec small { font-size: 11.400px; line-height: 24px; display: block; }
.sec svg { margin-top: 6.500px; }
.sbar { background: #f0f0f0; display: flex; flex-direction: column; align-items: center; }
.sbar svg:last-child { margin-top: auto; }
.inner { width: 16px; padding: 7px 1px 5px 0; }
.inner i { width: 11px; height: 125px; background: #c1c1c1; margin-top: 529px; }
.outer { width: 15px; padding: 6px 0; }
.outer i { width: 11px; height: 411px; background: #c1c1c1; margin-top: 5px; }
```
